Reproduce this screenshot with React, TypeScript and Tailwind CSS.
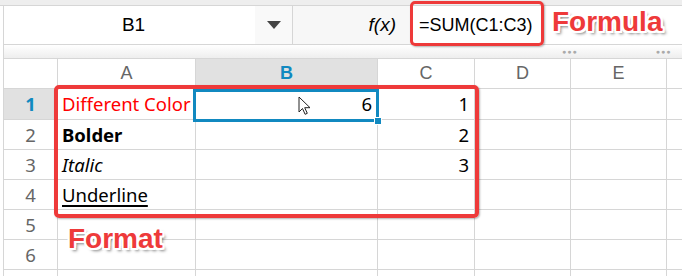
const cols = [
  { key: "A", w: "w-[138px]" },
  { key: "B", w: "w-[182px]" },
  { key: "C", w: "w-[97px]" },
  { key: "D", w: "w-[96px]" },
  { key: "E", w: "w-[96px]" },
];

const rows: { label: string; a?: React.ReactNode; b?: string; c?: string; h: string }[] = [
  { label: "1", a: <span className="text-[#ff0000]">Different Color</span>, b: "6", c: "1", h: "h-[31px]" },
  { label: "2", a: <span className="font-bold">Bolder</span>, c: "2", h: "h-[30px]" },
  { label: "3", a: <span className="italic">Italic</span>, c: "3", h: "h-[30px]" },
  {
    label: "4",
    a: <span className="underline decoration-2 underline-offset-[3px]">Underline</span>,
    h: "h-[30px]",
  },
  { label: "5", h: "h-[30px]" },
  { label: "6", h: "h-[30px]" },
  { label: "", h: "h-[30px]" },
];

const calloutText =
  "font-['Liberation_Sans',sans-serif] font-bold text-[28px] leading-none text-[#ee3a3a] [text-shadow:2px_0_white,-2px_0_white,0_2px_white,0_-2px_white,2px_2px_white,-2px_-2px_white,2px_-2px_white,-2px_2px_white,3px_3px_3px_rgba(0,0,0,0.5)]";

export default function App() {
  return (
    <div className="relative h-[276px] w-[682px] overflow-hidden bg-white font-['Liberation_Sans',sans-serif]">
      <div className="h-[6px] border-b border-[#d6d6d6] bg-[#eeeeee]" />

      <div className="ml-[3px] border-l border-[#d6d6d6]">
        {/* name box + formula bar */}
        <div className="flex h-[39px] border-b border-[#d6d6d6]">
          <div className="flex w-[289px] border-r border-[#d6d6d6]">
            <div className="flex flex-1 items-center justify-center pl-2 text-[19px] text-black">B1</div>
            <div className="flex w-[37px] items-center justify-center bg-[#f9f9f9]">
              <svg width="14" height="8" viewBox="0 0 14 8">
                <path d="M0 0h14L7 8z" fill="#444" />
              </svg>
            </div>
          </div>
          <div className="flex w-[117px] items-center justify-end bg-[#f7f7f7] pr-[14px] text-[19px] italic text-black">
            f(x)
          </div>
          <div className="flex flex-1 items-center pl-[9px] text-[18px] text-black">=SUM(C1:C3)</div>
        </div>

        {/* collapse strip */}
        <div className="flex h-[14px] items-center border-b border-[#d6d6d6] bg-gradient-to-b from-white to-[#eeeeee]">
          <div className="w-[558px]" />
          <span className="text-[7px] leading-none tracking-[1px] text-[#aaaaaa]">●●●</span>
          <div className="w-[78px]" />
          <span className="text-[7px] leading-none tracking-[1px] text-[#aaaaaa]">●●●</span>
        </div>

        {/* column headers */}
        <div className="flex h-[30px] border-b border-[#d6d6d6] text-[18px] text-[#666666]">
          <div className="w-[54px] border-r border-[#d6d6d6]" />
          {cols.map((c) => (
            <div
              key={c.key}
              className={`${c.w} flex items-center justify-center border-r border-[#d6d6d6] ${
                c.key === "B" ? "bg-[#e1e1e1] font-bold text-[#1189c0]" : ""
              }`}
            >
              {c.key}
            </div>
          ))}
          <div className="flex-1" />
        </div>

        {/* rows */}
        {rows.map((r, i) => (
          <div key={i} className={`flex ${r.h} border-b border-[#d6d6d6] font-['Noto_Sans',sans-serif] text-[18.5px] text-black`}>
            <div
              className={`flex w-[54px] items-center justify-center border-r border-[#d6d6d6] ${
                r.label === "1" ? "bg-[#e1e1e1] font-bold text-[#1189c0]" : "text-[#666666]"
              }`}
            >
              {r.label}
            </div>
            <div className="flex w-[138px] items-center overflow-hidden whitespace-nowrap border-r border-[#d6d6d6] pl-[4px]">
              {r.a}
            </div>
            <div className="flex w-[182px] items-center justify-end border-r border-[#d6d6d6] pr-[5px]">{r.b}</div>
            <div className="flex w-[97px] items-center justify-end border-r border-[#d6d6d6] pr-[5px]">{r.c}</div>
            <div className="w-[96px] border-r border-[#d6d6d6]" />
            <div className="w-[96px] border-r border-[#d6d6d6]" />
            <div className="flex-1" />
          </div>
        ))}
      </div>

      {/* selection on B1 */}
      <div className="absolute left-[193px] top-[89px] h-[33px] w-[186px] border-[3px] border-[#1189c0]" />
      <div className="absolute left-[374px] top-[117px] h-[8px] w-[8px] border border-white bg-[#1189c0]" />

      {/* mouse pointer */}
      <svg className="absolute left-[298px] top-[96px]" width="14" height="20" viewBox="0 0 14 20">
        <path d="M1 1v15l3.5-3.5 2.6 5.8 2.2-1-2.6-5.6H12z" fill="white" stroke="#222" strokeWidth="1" strokeLinejoin="round" />
      </svg>

      {/* callouts */}
      <div className="absolute left-[54px] top-[85px] h-[133px] w-[425px] rounded-[5px] border-4 border-[#ee3a3a] shadow-[1px_1px_2px_rgba(0,0,0,0.3)]" />
      <div className="absolute left-[410px] top-[1px] h-[45px] w-[134px] rounded-[5px] border-[3px] border-[#ee3a3a] shadow-[1px_1px_2px_rgba(0,0,0,0.3)]" />
      <div className={`absolute left-[552px] top-[8px] ${calloutText}`}>Formula</div>
      <div className={`absolute left-[68px] top-[225px] ${calloutText}`}>Format</div>
    </div>
  );
}
